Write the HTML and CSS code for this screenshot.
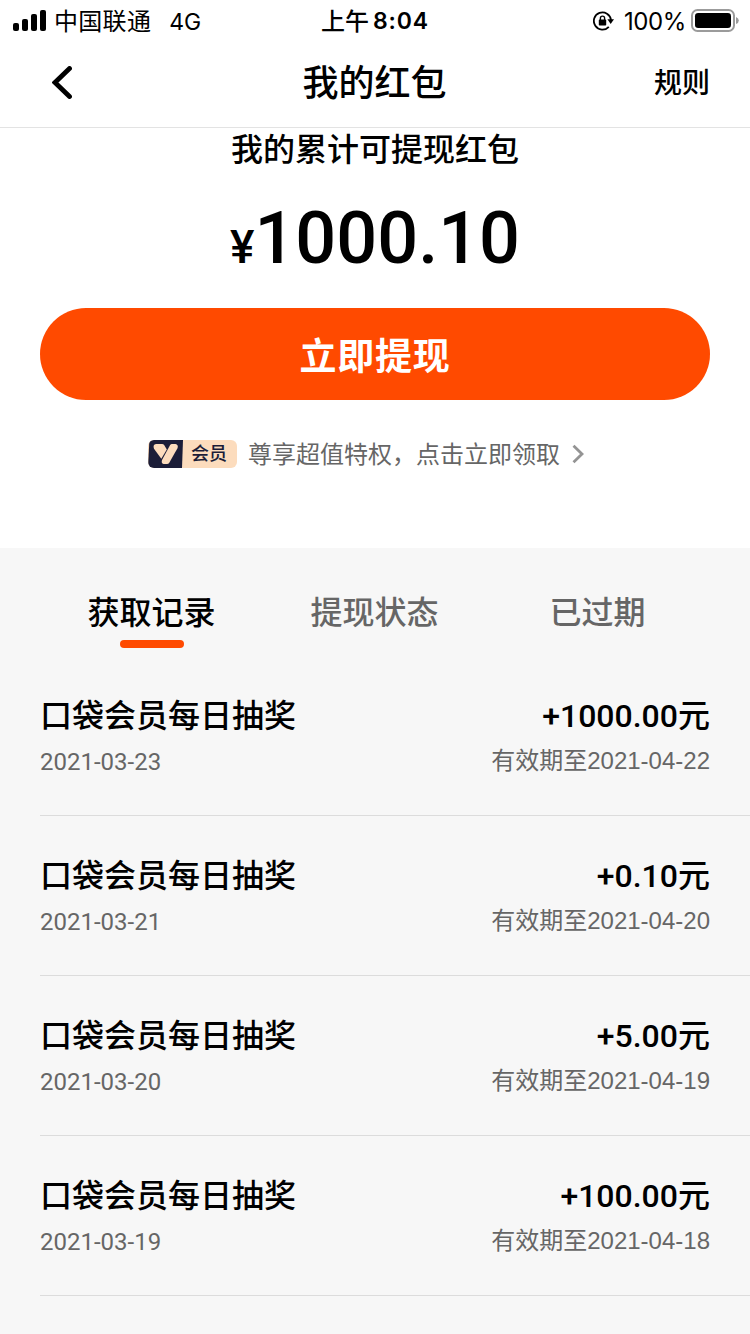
FILE: index.html
```html
<!DOCTYPE html>
<html lang="zh-CN">
<head>
<meta charset="utf-8">
<title>我的红包</title>
<link rel="stylesheet" href="styles.css">
</head>
<body>
<header class="top">
  <div class="status">
    <div class="status-left">
      <svg class="signal" width="33" height="21" viewBox="0 0 33 21"><rect x="0" y="13" width="6" height="8" rx="2"/><rect x="9" y="9" width="6" height="12" rx="2"/><rect x="18" y="4" width="6" height="17" rx="2"/><rect x="27" y="0" width="6" height="21" rx="2"/></svg>
      <span class="carrier">中国联通</span><span class="network">4G</span>
    </div>
    <div class="clock"><span>上午</span><b>8:04</b></div>
    <div class="status-right">
      <svg class="lock" width="21" height="20" viewBox="0 0 21 20"><path d="M18 9A8.600 8.600 0 1 0 15.800 15.800" fill="none" stroke="#000" stroke-width="1.800"/><path d="M14.400 8.200H21l-3.300 4.800z"/><rect x="5.800" y="8.600" width="7.400" height="6" rx=".8"/><path d="M7.400 9V7.200a2.100 2.100 0 0 1 4.200 0V9" fill="none" stroke="#000" stroke-width="1.400"/></svg>
      <span class="percent">100%</span>
      <svg class="battery" width="48" height="23" viewBox="0 0 48 23"><rect x="1" y="1" width="42" height="21" rx="5.500" fill="none" stroke="#9b9b9b" stroke-width="2"/><rect x="4" y="4" width="36" height="15" rx="3.200"/><path d="M45 8q2.800 1 2.800 3.500T45 15z" fill="#9b9b9b"/></svg>
    </div>
  </div>
  <nav class="nav">
    <svg class="back" width="20" height="33" viewBox="0 0 20 33"><path d="M17.500 2.500L3 16.500l14.500 14" fill="none" stroke="#000" stroke-width="4.800" stroke-linecap="round"/></svg>
    <h1>我的红包</h1>
    <a class="rules">规则</a>
  </nav>
</header>
<section class="wallet">
  <h2>我的累计可提现红包</h2>
  <div class="total"><span class="yen">¥</span><span>1000.10</span></div>
  <button class="withdraw">立即提现</button>
  <div class="member">
    <span class="badge"><svg class="mark" width="35" height="28" viewBox="0 0 35 28"><path d="M5 0H35L34 28H4Q0 28 .2 24L1.200 4Q1.500 0 5 0z" fill="#1b1d38"/><path d="M6 8.800Q4.500 4.500 8 4H14Q15.500 4 16.300 5.200L18.800 9.500 13.300 18.800z" fill="#fcdcbd"/><path d="M22 5.200Q22.700 4 24 4H27.500Q30.500 4.500 29.600 8L21.300 22.700Q20.500 24 19 24H15.500Q13 23.500 14 20z" fill="#fcdcbd"/></svg><span class="badge-text">会员</span></span>
    <span class="offer">尊享超值特权，点击立即领取</span>
    <svg class="chevron" width="12" height="20" viewBox="0 0 12 20"><path d="M1.500 1.800L10 10l-8.500 8.200" fill="none" stroke="#949494" stroke-width="2.800"/></svg>
  </div>
</section>
<main class="history">
  <div class="tabs">
    <span class="tab active">获取记录</span><span class="tab">提现状态</span><span class="tab">已过期</span>
  </div>
  <ul class="records">
    <li><div class="left"><strong>口袋会员每日抽奖</strong><time>2021-03-23</time></div><div class="right"><b>+1000.00元</b><small>有效期至2021-04-22</small></div></li>
    <li><div class="left"><strong>口袋会员每日抽奖</strong><time>2021-03-21</time></div><div class="right"><b>+0.10元</b><small>有效期至2021-04-20</small></div></li>
    <li><div class="left"><strong>口袋会员每日抽奖</strong><time>2021-03-20</time></div><div class="right"><b>+5.00元</b><small>有效期至2021-04-19</small></div></li>
    <li><div class="left"><strong>口袋会员每日抽奖</strong><time>2021-03-19</time></div><div class="right"><b>+100.00元</b><small>有效期至2021-04-18</small></div></li>
  </ul>
</main>
</body>
</html>
```
FILE: styles.css
```css
* { box-sizing: border-box; }
body { margin: 0; width: 750px; height: 1334px; overflow: hidden; display: flex; flex-direction: column; background: #fff; color: #000; font-family: Roboto, "Noto Sans CJK SC", sans-serif; }
svg { display: block; flex: none; }
h1, h2, ul { margin: 0; padding: 0; }

.top { height: 128px; border-bottom: 1px solid #e3e3e3; flex: none; }
.status { height: 40px; display: grid; grid-template-columns: 1fr auto 1fr; align-items: center; font: 24px/40px Inter, "Noto Sans CJK SC", sans-serif; white-space: nowrap; }
.status-left { display: flex; align-items: center; padding-left: 13px; }
.signal { margin-bottom: 2px; }
.carrier, .clock { padding-top: 2px; }
.network, .percent { padding-top: 1px; }
.carrier { margin-left: 8px; letter-spacing: .3px; }
.network { margin-left: 18px; font-size: 23px; }
.clock { display: flex; gap: 4px; font-weight: 500; }
.clock b { font-weight: 600; font-size: 23px; letter-spacing: .9px; margin-top: -1px; }
.status-right { display: flex; align-items: center; justify-content: flex-end; padding-right: 11px; }
.lock { margin-right: 10px; }
.percent { font-size: 24px; letter-spacing: -.4px; margin-right: 5px; }
.battery { margin-bottom: 1px; }
.nav { height: 87px; display: grid; grid-template-columns: 1fr auto 1fr; align-items: center; padding: 0 40px 3px 52px; }
.nav h1 { font-size: 36px; line-height: 52px; font-weight: 500; margin-left: -13px; padding-top: 4px; }
.rules { justify-self: end; font-size: 28px; line-height: 40px; font-weight: 500; padding-top: 4px; }

.wallet { height: 420px; flex: none; display: flex; flex-direction: column; align-items: center; }
.wallet h2 { font-size: 32px; line-height: 44px; font-weight: 500; }
.total { height: 136px; padding-top: 25px; display: flex; align-items: baseline; font-size: 72px; line-height: 84px; font-weight: 500; }
.yen { font-size: 46px; }
.withdraw { width: 670px; height: 92px; border: 0; border-radius: 46px; background: #ff4a00; color: #fff; font: 700 37px/92px "Noto Sans CJK SC", sans-serif; padding: 0 0 2px; letter-spacing: .7px; }
.member { display: flex; align-items: center; margin-top: 40px; height: 28px; padding-right: 17px; }
.badge { width: 89px; height: 28px; display: flex; border-radius: 6px; background: #fcdcbd; overflow: hidden; margin-left: -1px; }
.badge-text { padding-left: 8px; font-size: 18px; line-height: 27px; font-weight: 500; color: #1b1d38; }
.offer { margin: 0 12px 0 11px; font-size: 24px; line-height: 28px; color: #666; padding-top: 1px; }

.history { flex: 1; background: #f7f7f7; }
.tabs { height: 108px; display: grid; grid-template-columns: repeat(3, 223px); padding: 43px 40px 0; }
.tab { font-size: 32px; line-height: 44px; font-weight: 500; text-align: center; color: #666; }
.active { color: #000; }
.active::after { content: ""; display: block; width: 64px; height: 8px; border-radius: 4px; margin: 5px auto 0; background: #ff4a00; }
.records { list-style: none; padding-left: 40px; }
.records li { height: 160px; padding: 37px 40px 0 0; border-bottom: 1px solid #dcdcdc; display: flex; justify-content: space-between; }
.left, .right { display: flex; flex-direction: column; }
.right { align-items: flex-end; }
strong, .right b { font-size: 32px; line-height: 46px; font-weight: 500; }
time, small { font-size: 24px; line-height: 46px; color: #666; }
small { font-family: "Liberation Sans", "Noto Sans CJK SC", sans-serif; line-height: 44px; }
```
